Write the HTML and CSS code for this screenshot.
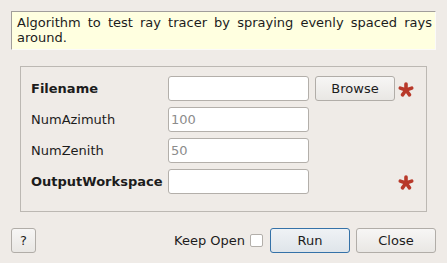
FILE: index.html
```html
<!DOCTYPE html>
<html lang="en">
  <head>
    <meta charset="UTF-8" />
    <title>RayTracerTester input dialog</title>
    <link rel="stylesheet" href="styles.css">
  </head>
  <body>
    <div class="dialog">
      <p class="summary">
        Algorithm to test ray tracer by spraying evenly spaced rays around.
      </p>

      <div class="group">
        <label class="name required">Filename</label>
        <input class="field" type="text" />
        <button class="btn browse">Browse</button>
        <span class="star">
          <svg width="16" height="16" viewBox="-8 -8 16 16">
            <g stroke="#b8392a" stroke-width="3.6" stroke-linecap="round">
              <line x1="0" y1="0" x2="0" y2="-6" />
              <line x1="0" y1="0" x2="0" y2="-6" transform="rotate(72)" />
              <line x1="0" y1="0" x2="0" y2="-6" transform="rotate(144)" />
              <line x1="0" y1="0" x2="0" y2="-6" transform="rotate(216)" />
              <line x1="0" y1="0" x2="0" y2="-6" transform="rotate(288)" />
            </g>
          </svg>
        </span>

        <label class="name">NumAzimuth</label>
        <input class="field" type="text" placeholder="100" />
        <span></span>
        <span></span>

        <label class="name">NumZenith</label>
        <input class="field" type="text" placeholder="50" />
        <span></span>
        <span></span>

        <label class="name required">OutputWorkspace</label>
        <input class="field" type="text" />
        <span></span>
        <span class="star">
          <svg width="16" height="16" viewBox="-8 -8 16 16">
            <g stroke="#b8392a" stroke-width="3.6" stroke-linecap="round">
              <line x1="0" y1="0" x2="0" y2="-6" />
              <line x1="0" y1="0" x2="0" y2="-6" transform="rotate(72)" />
              <line x1="0" y1="0" x2="0" y2="-6" transform="rotate(144)" />
              <line x1="0" y1="0" x2="0" y2="-6" transform="rotate(216)" />
              <line x1="0" y1="0" x2="0" y2="-6" transform="rotate(288)" />
            </g>
          </svg>
        </span>
      </div>

      <div class="footer">
        <button class="btn help">?</button>
        <div class="spacer"></div>
        <label class="keep">Keep Open <span class="check"></span></label>
        <button class="btn run">Run</button>
        <button class="btn">Close</button>
      </div>
    </div>
  </body>
</html>
```

FILE: styles.css
```css
html,
body {
  margin: 0;
  padding: 0;
  height: 100%;
  font-family: "DejaVu Sans", sans-serif;
  font-size: 13px;
  color: #1c1c1c;
  background: #efebe7;
}
.dialog {
  padding: 11px 11px 0 11px;
}
.summary {
  margin: 0;
  height: 39px;
  box-sizing: border-box;
  padding: 3px 3px 0 5px;
  line-height: 15px;
  text-align: justify;
  background: #ffffe0;
  border-top: 1px solid #a19e9b;
  border-left: 1px solid #a19e9b;
  border-right: 1px solid #fbfaf9;
  border-bottom: 1px solid #fbfaf9;
}
.group {
  margin: 16px 9px 0 9px;
  height: 146px;
  box-sizing: border-box;
  border: 1px solid #bcb8b3;
  padding: 9px 0 0 10px;
  display: grid;
  grid-template-columns: 137px 141px 86px 22px;
  grid-auto-rows: 25px;
  row-gap: 6px;
  align-items: center;
}
.name {
  white-space: nowrap;
}
.required {
  font-weight: bold;
}
.field {
  height: 25px;
  box-sizing: border-box;
  margin: 0;
  border: 1px solid #b3afaa;
  border-radius: 3px;
  background: #fff;
  padding: 0 2px;
  font: inherit;
}
.field::placeholder {
  color: #8c8c8c;
}
.btn {
  height: 25px;
  width: 80px;
  box-sizing: border-box;
  margin: 0;
  border: 1px solid #b1ada8;
  border-radius: 3px;
  background: linear-gradient(#f7f6f5, #e9e7e4);
  font: inherit;
  color: #1c1c1c;
  padding: 0;
}
.browse {
  justify-self: end;
}
.star {
  display: flex;
  justify-content: flex-end;
  padding-right: 3px;
  padding-top: 3px;
}
.footer {
  margin-top: 16px;
  display: flex;
  align-items: center;
  gap: 6px;
}
.help {
  width: 25px;
}
.spacer {
  flex: 1;
}
.keep {
  display: flex;
  align-items: center;
  gap: 5px;
  margin-right: 1px;
}
.check {
  width: 13px;
  height: 13px;
  box-sizing: border-box;
  border: 1px solid #b3afaa;
  border-radius: 2px;
  background: #fff;
}
.run {
  border-color: #3572a8;
  background: linear-gradient(#eff2f5, #dfe5ea);
}
```
